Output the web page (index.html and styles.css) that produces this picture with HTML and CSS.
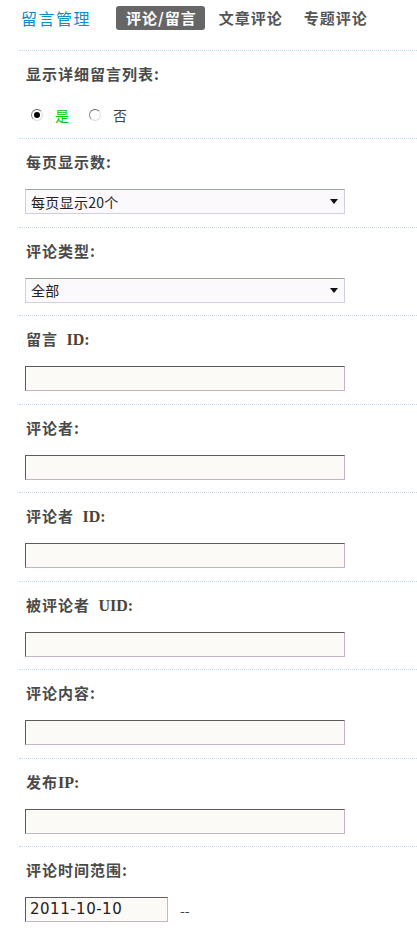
FILE: index.html
```html
<!DOCTYPE html>
<html lang="zh-CN">
<head>
    <meta charset="UTF-8">
    <meta name="viewport" content="width=device-width, initial-scale=1.0">
    <title>留言管理</title>
    <link rel="stylesheet" href="styles.css">
</head>
<body>
    <header class="topbar">
        <h1 class="title">留言管理</h1>
        <nav class="tabs">
            <span class="tab active">评论/留言</span>
            <span class="tab">文章评论</span>
            <span class="tab">专题评论</span>
        </nav>
    </header>

    <main class="filters">
        <div class="field field-radio">
            <label class="label">显示详细留言列表:</label>
            <div class="radios">
                <span class="radio checked"></span><span class="opt yes">是</span>
                <span class="radio"></span><span class="opt">否</span>
            </div>
        </div>

        <div class="field">
            <label class="label">每页显示数:</label>
            <div class="select"><span>每页显示20个</span><i class="arrow"></i></div>
        </div>

        <div class="field">
            <label class="label">评论类型:</label>
            <div class="select"><span>全部</span><i class="arrow"></i></div>
        </div>

        <div class="field">
            <label class="label">留言 <b class="latin">ID:</b></label>
            <div class="input"></div>
        </div>

        <div class="field">
            <label class="label">评论者:</label>
            <div class="input"></div>
        </div>

        <div class="field">
            <label class="label">评论者 <b class="latin">ID:</b></label>
            <div class="input"></div>
        </div>

        <div class="field">
            <label class="label">被评论者 <b class="latin">UID:</b></label>
            <div class="input"></div>
        </div>

        <div class="field">
            <label class="label">评论内容:</label>
            <div class="input"></div>
        </div>

        <div class="field">
            <label class="label">发布<b class="latin tight">IP:</b></label>
            <div class="input"></div>
        </div>

        <div class="field last">
            <label class="label">评论时间范围:</label>
            <div class="range">
                <div class="input date">2011-10-10</div>
                <span class="dash">--</span>
            </div>
        </div>
    </main>
</body>
</html>
```

FILE: styles.css
```css
body {
    margin: 0;
    padding: 0;
    background-color: #fff;
    color: #444;
    font-family: "Noto Sans CJK SC", "DejaVu Sans", sans-serif;
}

.topbar {
    display: flex;
    align-items: center;
    height: 36px;
    padding: 0 0 0 21px;
}

.title {
    margin: 0 25px 0 0;
    font-size: 16px;
    font-weight: normal;
    color: #0a8fc6;
    letter-spacing: 1.5px;
    line-height: 36px;
}

.tabs {
    display: flex;
    align-items: center;
}

.tab {
    font-size: 15px;
    font-weight: bold;
    color: #555;
    padding: 0 7px 0 14px;
    line-height: 24px;
    letter-spacing: 1px;
}

.tab.active {
    background-color: #666;
    color: #fff;
    border-radius: 3px;
    padding: 0 8px 0 10px;
}

.filters {
    margin: 14px 0 0 19px;
    border-top: 1px dotted #c4d8e0;
}

.field {
    padding: 13px 0 12.55px 7px;
    border-bottom: 1px dotted #c4d8e0;
}

.field.field-radio {
    padding-bottom: 12px;
}

.field.last {
    border-bottom: none;
}

.label {
    display: block;
    font-size: 15px;
    font-weight: bold;
    line-height: 20px;
    height: 20px;
    color: #4a4a4a;
    letter-spacing: 1px;
    margin-bottom: 17px;
}

.latin {
    font-family: "Liberation Serif", serif;
    font-size: 16px;
    line-height: 1;
    color: #4a4434;
    margin-left: 4px;
    letter-spacing: 0;
}

.latin.tight {
    margin-left: 0;
}

.radios {
    display: flex;
    align-items: center;
    height: 20px;
    padding: 0 0 1px 5px;
    margin-top: 21px;
    font-size: 14px;
}

.radio {
    width: 10px;
    height: 10px;
    border: 1px solid #888;
    border-top-color: #666;
    border-right-color: #ddd;
    border-bottom-color: #ddd;
    border-radius: 50%;
    position: relative;
    margin-right: 12px;
}

.radio.checked::after {
    content: "";
    position: absolute;
    left: 2px;
    top: 2px;
    width: 6px;
    height: 6px;
    border-radius: 50%;
    background-color: #000;
}

.opt {
    color: #444;
    margin-right: 20px;
}

.opt.yes {
    color: #00cc00;
}

.select {
    box-sizing: border-box;
    width: 320px;
    height: 25px;
    margin-left: -1px;
    display: flex;
    align-items: center;
    justify-content: space-between;
    padding: 0 6px 0 5px;
    border: 1px solid #d0d0e0;
    border-top-color: #98a898;
    background-color: #fbf9fb;
    font-size: 14px;
    letter-spacing: 0.3px;
    color: #222;
}

.arrow {
    width: 0;
    height: 0;
    border-left: 4px solid transparent;
    border-right: 4px solid transparent;
    border-top: 5px solid #111;
}

.input {
    box-sizing: border-box;
    width: 320px;
    height: 25px;
    margin-left: -1px;
    border: 1px solid #c4b4c4;
    border-top-color: #5c5c5c;
    border-left-color: #5c5c5c;
    background-color: #fcfaf7;
}

.range {
    display: flex;
    align-items: center;
}

.input.date {
    width: 143px;
    font-size: 15px;
    letter-spacing: 0.5px;
    line-height: 23px;
    padding-left: 4px;
    color: #222;
    font-family: "DejaVu Sans", sans-serif;
}

.dash {
    margin-left: 12px;
    font-size: 14px;
    color: #444;
}
```
